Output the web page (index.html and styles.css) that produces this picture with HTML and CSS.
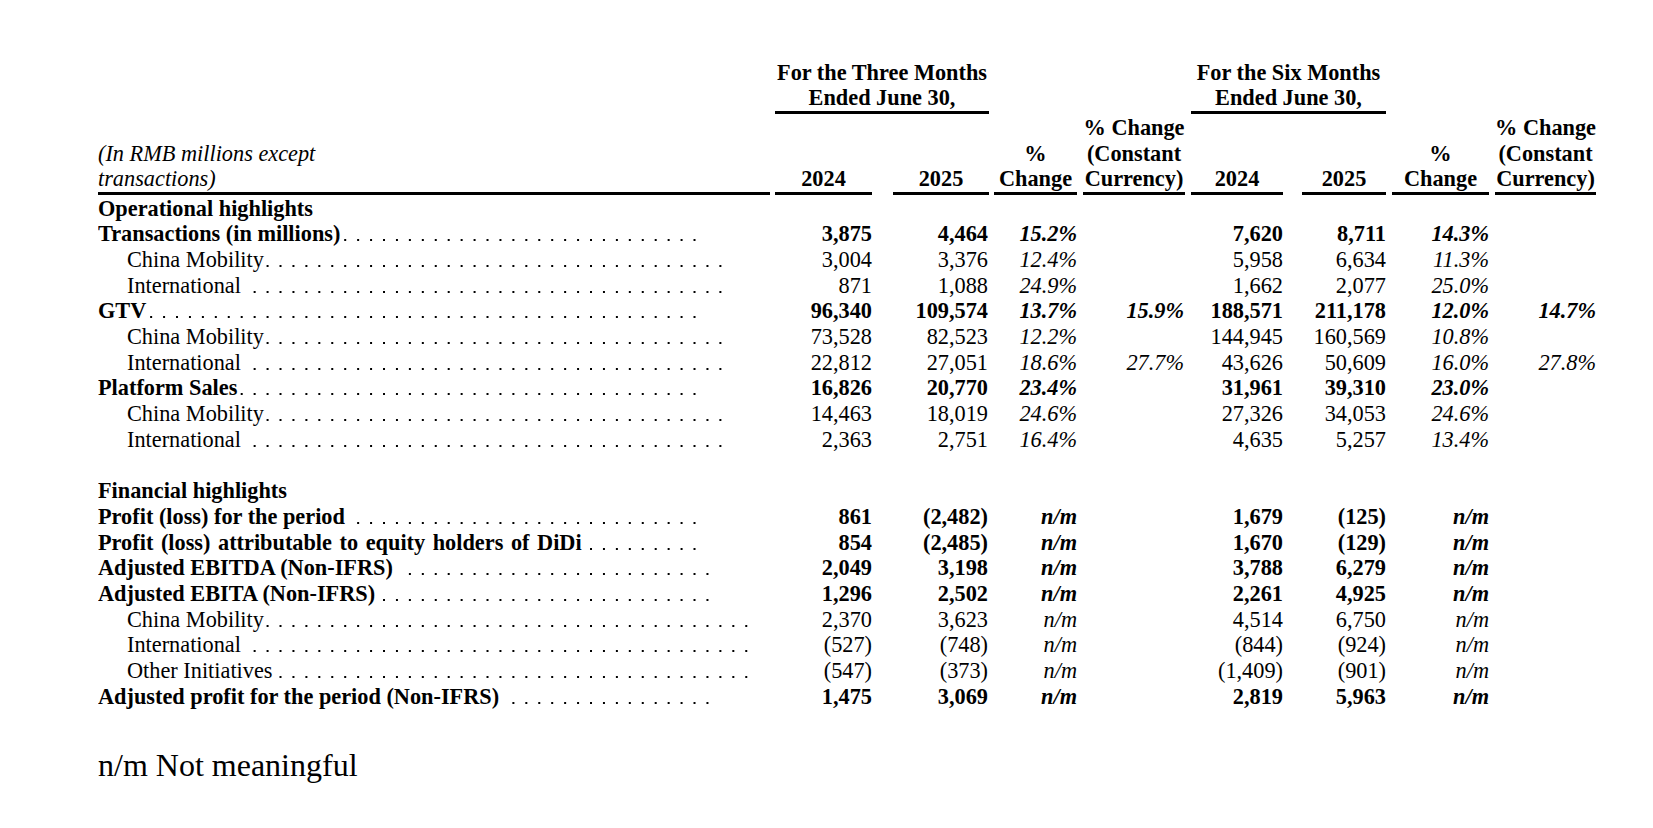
FILE: index.html
```html
<!DOCTYPE html>
<html lang="en">
<head>
<meta charset="utf-8">
<title>Operational and Financial Highlights</title>
<link rel="stylesheet" href="styles.css">
</head>
<body>
<main class="page">
  <section class="hdr grid">
    <div class="grp g3">For the Three Months<br>Ended June 30,</div>
    <div class="grp g6">For the Six Months<br>Ended June 30,</div>

    <div class="hc lab">(In RMB millions except<br>transactions)</div>
    <div class="hc c2">2024</div>
    <div class="hc c3">2025</div>
    <div class="hc c4">%<br>Change</div>
    <div class="hc c5">% Change<br>(Constant<br>Currency)</div>
    <div class="hc c6">2024</div>
    <div class="hc c7">2025</div>
    <div class="hc c8">%<br>Change</div>
    <div class="hc c9">% Change<br>(Constant<br>Currency)</div>
  </section>

  <section class="body grid">
    <div class="row b">
      <div class="l"><span>Operational highlights</span></div>
      <div class="n"></div><div class="n p3"></div><div class="n"></div><div class="n p5"></div>
      <div class="n"></div><div class="n"></div><div class="n"></div><div class="n"></div>
    </div>
    <div class="row b">
      <div class="l lead e695"><span>Transactions (in millions)</span></div>
      <div class="n">3,875</div><div class="n p3">4,464</div><div class="n i">15.2%</div><div class="n i p5"></div>
      <div class="n">7,620</div><div class="n">8,711</div><div class="n i">14.3%</div><div class="n i"></div>
    </div>
    <div class="row">
      <div class="l ind lead e722"><span>China Mobility</span></div>
      <div class="n">3,004</div><div class="n p3">3,376</div><div class="n i">12.4%</div><div class="n i p5"></div>
      <div class="n">5,958</div><div class="n">6,634</div><div class="n i">11.3%</div><div class="n i"></div>
    </div>
    <div class="row">
      <div class="l ind lead e722"><span>International </span></div>
      <div class="n">871</div><div class="n p3">1,088</div><div class="n i">24.9%</div><div class="n i p5"></div>
      <div class="n">1,662</div><div class="n">2,077</div><div class="n i">25.0%</div><div class="n i"></div>
    </div>
    <div class="row b">
      <div class="l lead e695"><span>GTV</span></div>
      <div class="n">96,340</div><div class="n p3">109,574</div><div class="n i">13.7%</div><div class="n i p5">15.9%</div>
      <div class="n">188,571</div><div class="n">211,178</div><div class="n i">12.0%</div><div class="n i">14.7%</div>
    </div>
    <div class="row">
      <div class="l ind lead e722"><span>China Mobility</span></div>
      <div class="n">73,528</div><div class="n p3">82,523</div><div class="n i">12.2%</div><div class="n i p5"></div>
      <div class="n">144,945</div><div class="n">160,569</div><div class="n i">10.8%</div><div class="n i"></div>
    </div>
    <div class="row">
      <div class="l ind lead e722"><span>International </span></div>
      <div class="n">22,812</div><div class="n p3">27,051</div><div class="n i">18.6%</div><div class="n i p5">27.7%</div>
      <div class="n">43,626</div><div class="n">50,609</div><div class="n i">16.0%</div><div class="n i">27.8%</div>
    </div>
    <div class="row b">
      <div class="l lead e695"><span>Platform Sales</span></div>
      <div class="n">16,826</div><div class="n p3">20,770</div><div class="n i">23.4%</div><div class="n i p5"></div>
      <div class="n">31,961</div><div class="n">39,310</div><div class="n i">23.0%</div><div class="n i"></div>
    </div>
    <div class="row">
      <div class="l ind lead e722"><span>China Mobility</span></div>
      <div class="n">14,463</div><div class="n p3">18,019</div><div class="n i">24.6%</div><div class="n i p5"></div>
      <div class="n">27,326</div><div class="n">34,053</div><div class="n i">24.6%</div><div class="n i"></div>
    </div>
    <div class="row">
      <div class="l ind lead e722"><span>International </span></div>
      <div class="n">2,363</div><div class="n p3">2,751</div><div class="n i">16.4%</div><div class="n i p5"></div>
      <div class="n">4,635</div><div class="n">5,257</div><div class="n i">13.4%</div><div class="n i"></div>
    </div>
    <div class="row">
      <div class="l"></div>
      <div class="n"></div><div class="n p3"></div><div class="n"></div><div class="n p5"></div>
      <div class="n"></div><div class="n"></div><div class="n"></div><div class="n"></div>
    </div>
    <div class="row b">
      <div class="l"><span>Financial highlights</span></div>
      <div class="n"></div><div class="n p3"></div><div class="n"></div><div class="n p5"></div>
      <div class="n"></div><div class="n"></div><div class="n"></div><div class="n"></div>
    </div>
    <div class="row b">
      <div class="l lead e695"><span>Profit (loss) for the period </span></div>
      <div class="n">861</div><div class="n p3">(2,482)</div><div class="n i">n/m</div><div class="n i p5"></div>
      <div class="n">1,679</div><div class="n">(125)</div><div class="n i">n/m</div><div class="n i"></div>
    </div>
    <div class="row b">
      <div class="l lead e695 wide"><span>Profit (loss) attributable to equity holders of DiDi</span></div>
      <div class="n">854</div><div class="n p3">(2,485)</div><div class="n i">n/m</div><div class="n i p5"></div>
      <div class="n">1,670</div><div class="n">(129)</div><div class="n i">n/m</div><div class="n i"></div>
    </div>
    <div class="row b">
      <div class="l lead e708"><span>Adjusted EBITDA (Non-IFRS) </span></div>
      <div class="n">2,049</div><div class="n p3">3,198</div><div class="n i">n/m</div><div class="n i p5"></div>
      <div class="n">3,788</div><div class="n">6,279</div><div class="n i">n/m</div><div class="n i"></div>
    </div>
    <div class="row b">
      <div class="l lead e708"><span>Adjusted EBITA (Non-IFRS)</span></div>
      <div class="n">1,296</div><div class="n p3">2,502</div><div class="n i">n/m</div><div class="n i p5"></div>
      <div class="n">2,261</div><div class="n">4,925</div><div class="n i">n/m</div><div class="n i"></div>
    </div>
    <div class="row">
      <div class="l ind lead e748"><span>China Mobility</span></div>
      <div class="n">2,370</div><div class="n p3">3,623</div><div class="n i">n/m</div><div class="n i p5"></div>
      <div class="n">4,514</div><div class="n">6,750</div><div class="n i">n/m</div><div class="n i"></div>
    </div>
    <div class="row">
      <div class="l ind lead e748"><span>International </span></div>
      <div class="n">(527)</div><div class="n p3">(748)</div><div class="n i">n/m</div><div class="n i p5"></div>
      <div class="n">(844)</div><div class="n">(924)</div><div class="n i">n/m</div><div class="n i"></div>
    </div>
    <div class="row">
      <div class="l ind lead e748"><span>Other Initiatives </span></div>
      <div class="n">(547)</div><div class="n p3">(373)</div><div class="n i">n/m</div><div class="n i p5"></div>
      <div class="n">(1,409)</div><div class="n">(901)</div><div class="n i">n/m</div><div class="n i"></div>
    </div>
    <div class="row b">
      <div class="l lead e708"><span>Adjusted profit for the period (Non-IFRS) </span></div>
      <div class="n">1,475</div><div class="n p3">3,069</div><div class="n i">n/m</div><div class="n i p5"></div>
      <div class="n">2,819</div><div class="n">5,963</div><div class="n i">n/m</div><div class="n i"></div>
    </div>
  </section>

  <p class="note">n/m Not meaningful</p>
</main>
</body>
</html>
```

FILE: styles.css
```css
html, body {
  margin: 0;
  padding: 0;
  background: #ffffff;
}

body {
  font-family: "Liberation Serif", "Times New Roman", serif;
  font-size: 22.3px;
  color: #000000;
}

.page {
  padding: 60px 0 0 98px;
}

.grid {
  display: grid;
  grid-template-columns: 672px 102px 117px 88px 108px 98px 103px 103px 107px;
  width: 1498px;
}

/* ---------- header ---------- */
.hdr {
  grid-template-rows: auto auto;
  font-weight: bold;
  white-space: nowrap;
}

.grp {
  grid-row: 1;
  text-align: center;
  line-height: 25.3px;
  border-bottom: 3px solid #000;
}

.g3 {
  grid-column: 2 / 4;
  margin-left: 5px;
}

.g6 {
  grid-column: 6 / 8;
  margin-left: 6px;
}

.hc {
  grid-row: 2;
  align-self: end;
  text-align: center;
  line-height: 25.5px;
  border-bottom: 3px solid #000;
}

.hc.c4, .hc.c5, .hc.c8, .hc.c9 {
  padding-top: 1.5px;
}

.hc.lab {
  text-align: left;
  font-weight: normal;
  font-style: italic;
}

.c2 { margin-left: 5px; }
.c3 { margin-left: 21px; }
.c4 { margin-left: 5px; }
.c5 { margin-left: 6px; }
.c6 { margin-left: 6px; }
.c7 { margin-left: 19px; }
.c8 { margin-left: 6px; }
.c9 { margin-left: 6px; }

/* ---------- body ---------- */
.body {
  grid-auto-rows: 25.7px;
  line-height: 25.7px;
  padding-top: 1px;
}

.row {
  display: contents;
}

.row.b {
  font-weight: bold;
}

.l {
  white-space: nowrap;
  overflow: hidden;
}

.l span {
  background: #ffffff;
  white-space: pre;
}

.l.ind {
  padding-left: 29px;
}

.l.wide {
  word-spacing: 2px;
}

.lead {
  background-image: linear-gradient(to right, #000 2px, transparent 2px);
  background-size: 12.94px 2px;
  background-repeat: repeat-x;
  background-position: 0.4px 18px;
  background-origin: border-box;
  background-clip: content-box;
}

.e695 { padding-right: 74px; }
.e708 { padding-right: 61px; }
.e722 { padding-right: 48px; }
.e748 { padding-right: 22px; }

.n {
  text-align: right;
  white-space: nowrap;
}

.n.p3, .n.p5 {
  padding-right: 1px;
}

.n.i {
  font-style: italic;
}

/* ---------- footnote ---------- */
.note {
  margin: 38px 0 0;
  font-size: 32px;
  line-height: 36px;
}
```
